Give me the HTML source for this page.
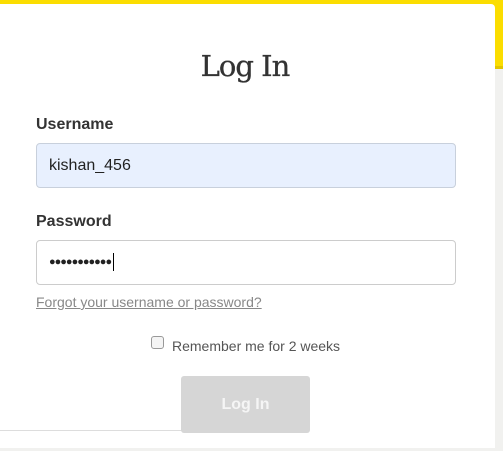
<!DOCTYPE html>
<html><head><style>
body{margin:0;width:503px;height:451px;overflow:hidden;background:#f1f1ef;font-family:"Liberation Sans",sans-serif;position:relative}
.y{position:absolute;left:0;top:0;width:503px;height:69px;background:#fbdd00}
.y2{position:absolute;left:495px;top:66px;width:8px;height:3px;background:#e2c600}
.m{position:absolute;left:0;top:4px;width:495px;height:444px;background:#fff;border-top-right-radius:4px}
h1{position:absolute;left:0;width:490px;top:49px;margin:0;text-align:center;font:400 29px "DejaVu Serif",serif;color:#333;letter-spacing:-1px;-webkit-text-stroke:0.3px #333}
.l{position:absolute;left:36px;font-weight:bold;font-size:16px;color:#333}
.i{position:absolute;left:36px;width:420px;height:45px;border:1px solid #ccc;border-radius:4px;box-sizing:border-box;font-size:16px;color:#222;padding-left:12px;line-height:43px}
a{position:absolute;left:36px;top:294px;font-size:14px;color:#888;text-decoration:underline}
.cb{position:absolute;left:151px;top:336px;width:11px;height:11px;border:1px solid #999;border-radius:3px;background:#f4f4f4}
.r{position:absolute;left:172px;top:338px;font-size:14px;color:#555}
.b{position:absolute;left:181px;top:376px;width:129px;height:57px;background:#d6d6d6;border-radius:3px;color:#f5f5f5;font-weight:bold;font-size:16px;text-align:center;line-height:57px}
.ln{position:absolute;left:0;top:430px;width:214px;height:1px;background:#ddd}
</style></head><body>
<div class="y"></div><div class="y2"></div>
<div class="m"></div>
<h1>Log In</h1>
<div class="l" style="top:116px">Username</div>
<div class="i" style="top:143px;background:#e8f0fe;border-color:#c8d0dc">kishan_456</div>
<div class="l" style="top:213px">Password</div>
<div class="i" style="top:240px;font-size:11px;letter-spacing:-1px">●●●●●●●●●●●<span style="display:inline-block;width:1px;height:18px;background:#000;vertical-align:middle;margin-left:2px"></span></div>
<a>Forgot your username or password?</a>
<div class="cb"></div><div class="r">Remember me for 2 weeks</div>
<div class="ln"></div>
<div class="b">Log In</div>
</body></html>
